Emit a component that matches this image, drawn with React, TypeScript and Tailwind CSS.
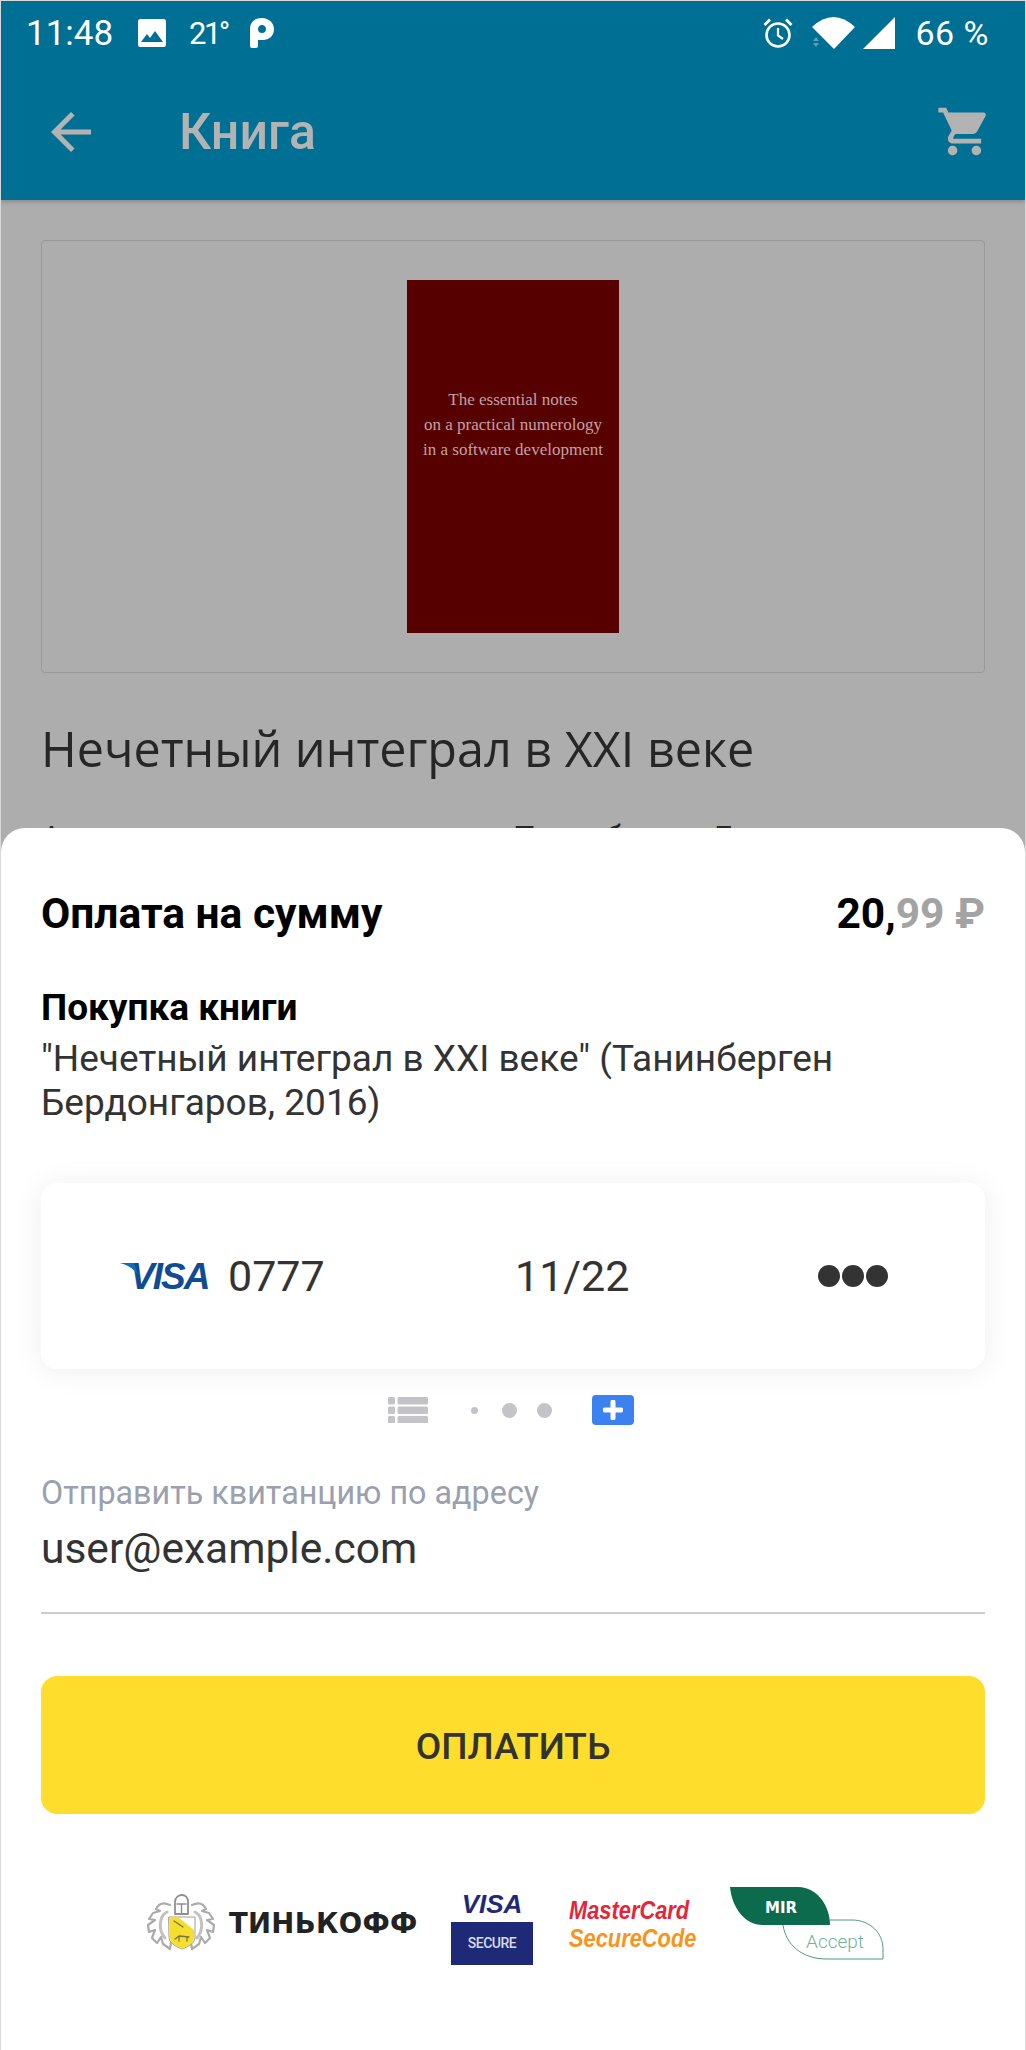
import { MdArrowBack, MdShoppingCart } from 'react-icons/md';

/* Small icons that the icon packages don't have in the right shape */
function PictureIcon() {
  return (
    <svg width="30" height="30" viewBox="0 0 30 30">
      <rect x="1" y="1" width="28" height="28" rx="2.5" fill="#fff" />
      <path d="M4 24 L10 16 L13 20 L18 13 L26 24 Z" fill="#006f94" />
    </svg>
  );
}

function ParkingIcon() {
  return (
    <svg width="24" height="30" viewBox="0 0 24 30">
      <path
        fillRule="evenodd"
        fill="#fff"
        d="M0 11 C0 4 5 0 12 0 C19 0 24 5 24 11 C24 18 19 22 13 22 L8 22 L8 28 Q8 30 6 30 L2 30 Q0 30 0 28 Z M12 7 C9.500 7 8 9 8 11 C8 13.500 9.500 15 12 15 C14.500 15 16 13.500 16 11 C16 9 14.500 7 12 7 Z"
      />
    </svg>
  );
}

function AlarmIcon() {
  return (
    <svg width="32" height="32" viewBox="0 0 32 32" fill="none" stroke="#fff">
      <circle cx="16" cy="18" r="11.500" strokeWidth="2.6" />
      <path d="M16 11 V18.500 L21 22" strokeWidth="2.2" />
      <path d="M2.500 8 L8 2.500 M29.500 8 L24 2.500" strokeWidth="2.8" />
    </svg>
  );
}

function WifiIcon() {
  return (
    <svg width="43" height="32" viewBox="0 0 43 32">
      <path d="M0 10 Q21.500 -10 43 10 L22 32 Z" fill="#fff" />
      <path d="M1 24 L4 20 L7 24 Z M1 26 L7 26 L4 30 Z" fill="#5f9fb8" />
    </svg>
  );
}

function SignalIcon() {
  return (
    <svg width="32" height="32" viewBox="0 0 32 32">
      <path d="M32 0 V32 H0 Z" fill="#fff" />
    </svg>
  );
}

function CardList() {
  return (
    <svg width="40" height="26" viewBox="0 0 40 26" fill="#c4c4c8">
      <rect x="0" y="0" width="7" height="7.500" rx="1.500" />
      <rect x="9.500" y="0" width="30.500" height="7.500" rx="1.500" />
      <rect x="0" y="9.500" width="7" height="7.500" rx="1.500" />
      <rect x="9.500" y="9.500" width="30.500" height="7.500" rx="1.500" />
      <rect x="0" y="19" width="7" height="7.500" rx="1.500" />
      <rect x="9.500" y="19" width="30.500" height="7.500" rx="1.500" />
    </svg>
  );
}

function TinkoffEmblem() {
  return (
    <svg width="70" height="64" viewBox="0 0 70 64" fill="none" strokeLinecap="round" strokeLinejoin="round">
      {/* wreath */}
      <path
        d="M24 13 C16 9 12 13 10 17 L14 19 L7 21 L3 27 L9 28 L2 33 L3 40 L9 38 L6 46 L11 51 L15 45 L17 52 L24 57 L25 50"
        stroke="#ababab"
        strokeWidth="2.200"
      />
      <path
        d="M46 13 C54 9 58 13 60 17 L56 19 L63 21 L67 27 L61 28 L68 33 L67 40 L61 38 L64 46 L59 51 L55 45 L53 52 L46 57 L45 50"
        stroke="#ababab"
        strokeWidth="2.200"
      />
      <path d="M21 20 C13 24 12 38 19 46 M49 20 C57 24 58 38 51 46" stroke="#c2c2c2" strokeWidth="3" />
      {/* helmet */}
      <path d="M29 10 C29 5 33 3 36 3 C39 3 42 5 42 10 V22 H29 Z" fill="#fff" stroke="#8f8f8f" strokeWidth="1.800" />
      <path d="M31 12 H40 M35.500 12 V22" stroke="#8f8f8f" strokeWidth="1.500" />
      {/* shield */}
      <path d="M23 25 H49 V46 Q49 52 36 57 Q23 52 23 46 Z" fill="#fff" stroke="#9c9c9c" strokeWidth="1" />
      <path d="M23 25 H32 L48 38 V46 Q48 52 36 57 Q24 52 24 46 Z" fill="#f5de2f" />
      <path d="M28 29 L37 35 M29 47 L33 44 L43 45 M33 44 V49 M41 45 V49" stroke="#7a7440" strokeWidth="1.300" />
    </svg>
  );
}

function MirAccept() {
  return (
    <svg width="156" height="74" viewBox="0 0 156 74">
      <path d="M53 38 C56 58 72 72 97 72 L153 72 L153 62 C153 46 140 33 122 33 L100 33" fill="none" stroke="#4d9c7f" strokeWidth="1" />
      <path d="M0 0 L68 0 C88 0 100 20 100 38 L33 38 C14 38 2 20 0 0 Z" fill="#0c6b4c" />
      <text x="35" y="26" fontFamily="DejaVu Sans" fontWeight="700" fontSize="15" fill="#fff">MIR</text>
      <text x="76" y="61" fontFamily="Roboto" fontWeight="300" fontSize="19" fill="#74b199">Accept</text>
    </svg>
  );
}

export default function App() {
  return (
    <div className="relative h-[2050px] w-[1026px] overflow-hidden border-x border-t border-[#d9d9d9] bg-[#adadad] font-['Roboto',sans-serif]">
      {/* Status bar + toolbar */}
      <header className="h-[199px] bg-[#006f94] shadow-[0_2px_4px_rgba(0,0,0,0.2)]">
        <div className="flex h-[62px] items-center justify-between pl-[25px] pr-[36px] pt-[2px] text-white">
          <div className="flex items-center">
            <span className="w-[87px] text-[35px] leading-none">11:48</span>
            <span className="ml-[24px]"><PictureIcon /></span>
            <span className="ml-[22px] w-[39px] text-[31px] leading-none tracking-[-2.500px]">21°</span>
            <span className="ml-[22px]"><ParkingIcon /></span>
          </div>
          <div className="flex items-center">
            <AlarmIcon />
            <span className="ml-[18px]"><WifiIcon /></span>
            <span className="ml-[8px]"><SignalIcon /></span>
            <span className="ml-[20px] text-[34px] leading-none tracking-[0.500px]">66 %</span>
          </div>
        </div>
        <div className="flex h-[137px] items-center justify-between pl-[40px] pr-[32px]">
          <div className="flex items-center">
            <MdArrowBack size={60} className="text-[#b3b3b3]" />
            <span className="ml-[78px] text-[50px] font-medium leading-none text-[#b3b3b3]">Книга</span>
          </div>
          <MdShoppingCart size={57} className="text-[#b3b3b3]" />
        </div>
      </header>

      {/* Book page, dimmed behind the sheet */}
      <main className="px-[40px] pt-[40px]">
        <div className="flex h-[433px] items-center justify-center rounded-[4px] border border-[#999999]">
          <div className="flex h-[353px] w-[212px] flex-col items-center bg-[#560000] pt-[107px] font-['Liberation_Serif',serif] text-[17px] leading-[25px] text-[#c4a0a0]">
            <span>The essential notes</span>
            <span>on a practical numerology</span>
            <span>in a software development</span>
          </div>
        </div>
        <h1 className="mt-[47px] font-['Open_Sans',sans-serif] text-[48.500px] font-normal leading-[56px] text-[#262626]">
          Нечетный интеграл в XXI веке
        </h1>
        <div className="mt-[39px] flex text-[32px] leading-[44px] text-[#262626]">
          <span className="w-[474px]">Автор</span>
          <span>Танинберген Бердонгаров</span>
        </div>
      </main>

      {/* Payment sheet */}
      <section className="absolute inset-x-0 bottom-0 top-[827px] rounded-t-[24px] bg-white px-[40px] text-[#333333]">
        <div className="flex items-center justify-between pt-[61px]">
          <span className="text-[42.500px] font-bold leading-[50px] text-black">Оплата на сумму</span>
          <span className="text-[42.500px] font-bold leading-[50px] text-black">
            20,<span className="text-[#a3a3a3]">99 ₽</span>
          </span>
        </div>
        <div className="mt-[47px] text-[37px] font-bold leading-[44px] text-black">Покупка книги</div>
        <p className="mt-[7px] text-[37px] leading-[44px]">
          "Нечетный интеграл в XXI веке" (Танинберген Бердонгаров, 2016)
        </p>

        <div className="mt-[58px] flex h-[186px] items-center rounded-[16px] bg-white pl-[79px] pr-[97px] shadow-[0_2px_30px_rgba(0,0,0,0.07)]">
          <span className="relative w-[87px] pl-[10px] font-['Liberation_Sans',sans-serif] text-[37px] font-bold italic leading-none tracking-[-2px] text-[#0f4c92]">
            <svg className="absolute left-0 top-[4px]" width="20" height="14" viewBox="0 0 20 14">
              <path d="M0 1 H14 L18 13 C14 7 8 3 0 1 Z" fill="#0f6fb3" />
            </svg>
            VISA
          </span>
          <span className="ml-[21px] w-[97px] text-[43px] leading-none">0777</span>
          <span className="ml-[190px] text-[43px] leading-none">11/22</span>
          <span className="ml-auto flex gap-[2px]">
            <span className="size-[22px] rounded-full bg-[#333333]" />
            <span className="size-[22px] rounded-full bg-[#333333]" />
            <span className="size-[22px] rounded-full bg-[#333333]" />
          </span>
        </div>

        <div className="mt-[26px] flex h-[30px] items-center pl-[347px]">
          <CardList />
          <span className="ml-[43px] size-[7px] rounded-full bg-[#c4c4c8]" />
          <span className="ml-[24px] size-[15px] rounded-full bg-[#c4c4c8]" />
          <span className="ml-[20px] size-[15px] rounded-full bg-[#c4c4c8]" />
          <span className="ml-[40px] flex h-[30px] w-[42px] items-center justify-center rounded-[4px] bg-[#3b82f0]">
            <svg width="20" height="20" viewBox="0 0 20 20">
              <path d="M10 2 V18 M2 10 H18" stroke="#fff" strokeWidth="5" strokeLinecap="round" />
            </svg>
          </span>
        </div>

        <div className="mt-[48px] text-[32.300px] leading-[40px] text-[#9aa0ad]">Отправить квитанцию по адресу</div>
        <div className="mt-[13px] border-b-2 border-[#cccccc] pb-[40px] text-[42.500px] leading-[46px]">user@example.com</div>

        <button className="mt-[62px] flex h-[138px] w-full items-center justify-center rounded-[16px] bg-[#ffdd2d] pt-[3px] text-[37px] font-medium text-[#333333]">
          ОПЛАТИТЬ
        </button>

        {/* Acquirer logos */}
        <div className="mt-[73px] flex items-center pl-[105px]">
          <TinkoffEmblem />
          <span className="ml-[13px] w-[188px] whitespace-nowrap font-['DejaVu_Sans',sans-serif] text-[27.500px] font-bold leading-none tracking-[0.300px] text-[#222222]">ТИНЬКОФФ</span>
          <div className="ml-[34px] flex w-[82px] translate-y-[4px] flex-col items-center">
            <span className="font-['Liberation_Sans',sans-serif] text-[26px] font-bold italic leading-[24px] text-[#1e2a78]">VISA</span>
            <span className="mt-[6px] flex h-[43px] w-[82px] items-center justify-center bg-[#1e2a78] text-[14px] font-medium tracking-[-0.500px] text-[#d8dbe8]">SECURE</span>
          </div>
          <div className="ml-[36px] flex w-[127px] flex-col gap-[2px] font-['Liberation_Sans',sans-serif] text-[26px] font-bold italic leading-[26px]">
            <span className="origin-left scale-x-[0.84] whitespace-nowrap text-[#e3263a]">MasterCard</span>
            <span className="origin-left scale-x-[0.84] whitespace-nowrap text-[#f7941d]">SecureCode</span>
          </div>
          <span className="ml-[34px]"><MirAccept /></span>
        </div>
      </section>
    </div>
  );
}
